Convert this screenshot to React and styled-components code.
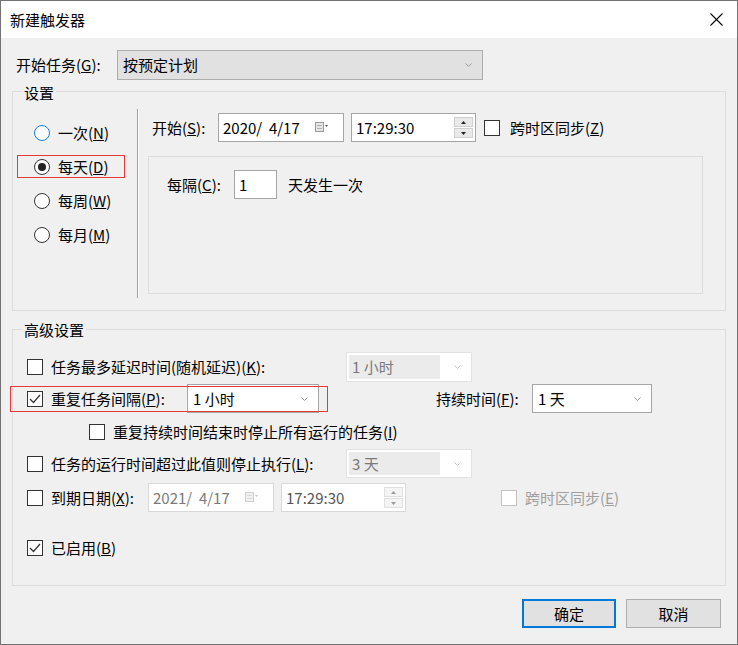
import React from "react";
import styled, { createGlobalStyle } from "styled-components";

const GlobalStyle = createGlobalStyle`
  html, body {
    margin: 0;
    padding: 0;
    background: #fff;
  }
  body {
    font-family: "Noto Sans CJK SC", "Noto Sans", sans-serif;
    font-size: 15px;
    line-height: 20px;
    color: #000;
  }
  * { box-sizing: border-box; }
`;

const Window = styled.div`
  width: 738px;
  height: 645px;
  border: 1px solid #737373;
  background: #f0f0f0;
  display: flex;
  flex-direction: column;
`;

const TitleBar = styled.div`
  height: 37px;
  background: #fff;
  display: flex;
  align-items: center;
  justify-content: space-between;
  padding: 0 14px 0 9px;
  flex-shrink: 0;
`;

const Body = styled.div`
  flex: 1;
  padding: 12px 11px 0 11px;
  display: flex;
  flex-direction: column;
`;

const Row = styled.div`
  display: flex;
  align-items: center;
  height: ${(p) => p.h || 29}px;
  margin-top: ${(p) => p.mt || 0}px;
  padding-left: ${(p) => p.pl || 0}px;
`;

const Label = styled.span`
  display: inline-block;
  flex-shrink: 0;
  width: ${(p) => (p.w ? p.w + "px" : "auto")};
  margin-left: ${(p) => p.ml || 0}px;
  color: ${(p) => (p.disabled ? "#a0a0a0" : "#000")};
  white-space: nowrap;
`;

const Group = styled.div`
  border: 1px solid #dcdcdc;
  margin-top: ${(p) => p.mt || 0}px;
  padding-bottom: ${(p) => p.pb || 0}px;
`;

const Legend = styled.div`
  width: fit-content;
  margin: ${(p) => p.mt}px 0 0 9px;
  padding: 0 2px;
  background: #f0f0f0;
`;

const SettingsBody = styled.div`
  display: flex;
  margin-top: 6px;
  height: 189px;
`;

const RadioColumn = styled.div`
  width: 124px;
  padding: 12px 0 0 4px;
  display: flex;
  flex-direction: column;
  gap: 11px;
`;

const RadioRow = styled.div`
  display: flex;
  align-items: center;
  gap: 8px;
  width: 108px;
  height: 23px;
  padding-left: 17px;
  outline: ${(p) => (p.mark ? "1px solid #e5393b" : "none")};
  outline-offset: -1px;
`;

const RadioDot = styled.span`
  width: 16px;
  height: 16px;
  border-radius: 50%;
  border: 1px solid ${(p) => (p.focus ? "#1a7fd6" : "#333")};
  background: #fff;
  display: flex;
  align-items: center;
  justify-content: center;
  flex-shrink: 0;
  &::after {
    content: "";
    width: 8px;
    height: 8px;
    border-radius: 50%;
    background: ${(p) => (p.checked ? "#222" : "transparent")};
  }
`;

const Separator = styled.div`
  width: 2px;
  border-left: 1px solid #a0a0a0;
  border-right: 1px solid #fff;
`;

const RightPanel = styled.div`
  flex: 1;
  margin-left: 9px;
  padding: 4px 22px 0 0;
  display: flex;
  flex-direction: column;
`;

const InnerBox = styled.div`
  margin-top: 14px;
  height: 138px;
  border: 1px solid #dcdcdc;
  padding: 13px 0 0 18px;
`;

const Field = styled.div`
  width: ${(p) => p.w}px;
  height: ${(p) => p.h || 29}px;
  margin-left: ${(p) => p.ml || 0}px;
  flex-shrink: 0;
  display: flex;
  align-items: center;
  padding-left: 4px;
  background: #fff;
  border: 1px solid ${(p) => (p.disabled ? "#d9d9d9" : "#a5a5a5")};
  color: ${(p) => (p.disabled ? p.dim || "#7a7a7a" : "#000")};
  white-space: pre;
`;

const FieldText = styled.span`
  flex: 1;
`;

const Combo = styled.div`
  width: ${(p) => p.w}px;
  height: ${(p) => p.h || 29}px;
  margin-left: ${(p) => p.ml || 0}px;
  flex-shrink: 0;
  display: flex;
  align-items: center;
  justify-content: space-between;
  padding: 0 10px 0 ${(p) => (p.tone === "disabled" ? 2 : 5)}px;
  background: ${(p) => (p.tone === "list" ? "#e1e1e1" : "#fff")};
  border: 1px solid
    ${(p) =>
      p.tone === "list" ? "#adadad" : p.tone === "disabled" ? "#e2e2e2" : "#a6a6a6"};
`;

const ComboText = styled.span`
  flex: 1;
  align-self: stretch;
  display: flex;
  align-items: center;
  color: ${(p) => (p.disabled ? "#7a7a7a" : "#000")};
  background: ${(p) => (p.disabled ? "#ebebeb" : "transparent")};
  margin: ${(p) => (p.disabled ? "2px 14px 2px 0" : "0")};
  padding-left: ${(p) => (p.disabled ? 3 : 0)}px;
`;

const Spinner = styled.div`
  display: flex;
  flex-direction: column;
  gap: 1px;
  margin-right: 2px;
`;

const SpinButton = styled.span`
  width: 19px;
  height: 10px;
  background: ${(p) => (p.disabled ? "#f4f4f4" : "#e9e9e9")};
  border: 1px solid ${(p) => (p.disabled ? "#e0e0e0" : "#cfcfcf")};
  display: flex;
  align-items: center;
  justify-content: center;
`;

const Box = styled.span`
  width: 16px;
  height: 16px;
  flex-shrink: 0;
  margin-left: ${(p) => p.ml || 0}px;
  margin-right: 8px;
  background: #fff;
  border: 1px solid ${(p) => (p.disabled ? "#c4c4c4" : "#333")};
  display: flex;
  align-items: center;
  justify-content: center;
`;

const Mark = styled.div`
  width: fit-content;
  display: flex;
  align-items: center;
  height: 26px;
  margin-left: -3px;
  padding: 0 9px 0 17px;
  outline: 1px solid #e5393b;
  outline-offset: -1px;
`;

const Footer = styled.div`
  display: flex;
  justify-content: flex-end;
  gap: 10px;
  margin: 13px 5px 0 0;
`;

const Button = styled.button`
  width: ${(p) => p.w}px;
  height: 29px;
  font: inherit;
  color: #000;
  background: #e1e1e1;
  border: ${(p) => (p.primary ? "2px solid #0078d7" : "1px solid #adadad")};
  padding: 0;
`;

const Chevron = ({ color = "#9a9a9a" }) => (
  <svg width="7" height="4" viewBox="0 0 7 4">
    <polyline points="0.5,0.5 3.5,3.5 6.5,0.5" fill="none" stroke={color} strokeWidth="1" />
  </svg>
);

const CalendarIcon = ({ dim }) => (
  <svg width="14" height="11" viewBox="0 0 14 11" style={{ marginRight: 14 }}>
    <rect x="0.5" y="0.5" width="8" height="9" fill={dim ? "#f2f2f2" : "#e6e6e6"} stroke={dim ? "#cfcfcf" : "#9a9a9a"} />
    <line x1="2" y1="3.5" x2="7" y2="3.5" stroke={dim ? "#d6d6d6" : "#b0b0b0"} />
    <line x1="2" y1="6.5" x2="7" y2="6.5" stroke={dim ? "#d6d6d6" : "#b0b0b0"} />
    <polygon points="10,3 13,3 11.5,5" fill={dim ? "#c8c8c8" : "#555"} />
  </svg>
);

const Tri = ({ up, dim }) => (
  <svg width="5" height="3" viewBox="0 0 5 3">
    <polygon points={up ? "0,3 5,3 2.5,0" : "0,0 5,0 2.5,3"} fill={dim ? "#9a9a9a" : "#222"} />
  </svg>
);

const Check = ({ dim }) => (
  <svg width="12" height="10" viewBox="0 0 12 10">
    <polyline points="1,5 4.5,8.5 11,1" fill="none" stroke={dim ? "#999" : "#333"} strokeWidth="1.2" />
  </svg>
);

const CheckBox = ({ checked, disabled, ml }) => (
  <Box disabled={disabled} ml={ml}>
    {checked && <Check />}
  </Box>
);

const TimeField = ({ ml, disabled, value }) => (
  <Field w={125} ml={ml} disabled={disabled} dim="#555">
    <FieldText>{value}</FieldText>
    <Spinner>
      <SpinButton disabled={disabled}><Tri up dim={disabled} /></SpinButton>
      <SpinButton disabled={disabled}><Tri dim={disabled} /></SpinButton>
    </Spinner>
  </Field>
);

const DateField = ({ ml, disabled, value }) => (
  <Field w={126} ml={ml} disabled={disabled}>
    <FieldText>{value}</FieldText>
    <CalendarIcon dim={disabled} />
  </Field>
);

const ComboBox = ({ w, h, ml, tone, value }) => (
  <Combo w={w} h={h} ml={ml} tone={tone}>
    <ComboText disabled={tone === "disabled"}>{value}</ComboText>
    <Chevron color={tone === "disabled" ? "#c8c8c8" : "#9a9a9a"} />
  </Combo>
);

const radios = [
  { text: "一次", key: "N", focus: true },
  { text: "每天", key: "D", checked: true, mark: true },
  { text: "每周", key: "W" },
  { text: "每月", key: "M" },
];

const Key = ({ k }) => (
  <>
    (<u>{k}</u>)
  </>
);

export default function App() {
  return (
    <>
      <GlobalStyle />
      <Window>
        <TitleBar>
          <span>新建触发器</span>
          <svg width="13" height="13" viewBox="0 0 13 13">
            <line x1="0.5" y1="0.5" x2="12.5" y2="12.5" stroke="#000" strokeWidth="1.1" />
            <line x1="12.5" y1="0.5" x2="0.5" y2="12.5" stroke="#000" strokeWidth="1.1" />
          </svg>
        </TitleBar>

        <Body>
          <Row h={30} pl={4}>
            <Label w={101}>
              开始任务<Key k="G" />:
            </Label>
            <ComboBox w={366} h={30} tone="list" value="按预定计划" />
          </Row>

          <Group mt={11} pb={12}>
            <Legend mt={-9}>设置</Legend>
            <SettingsBody>
              <RadioColumn>
                {radios.map((r) => (
                  <RadioRow key={r.key} mark={r.mark}>
                    <RadioDot checked={r.checked} focus={r.focus} />
                    <Label>
                      {r.text}
                      <Key k={r.key} />
                    </Label>
                  </RadioRow>
                ))}
              </RadioColumn>
              <Separator />
              <RightPanel>
                <Row pl={4}>
                  <Label w={66}>
                    开始<Key k="S" />:
                  </Label>
                  <DateField value="2020/  4/17" />
                  <TimeField ml={7} value="17:29:30" />
                  <CheckBox ml={8} />
                  <Label ml={2}>
                    跨时区同步<Key k="Z" />
                  </Label>
                </Row>
                <InnerBox>
                  <Row>
                    <Label w={67}>
                      每隔<Key k="C" />:
                    </Label>
                    <Field w={43}>1</Field>
                    <Label ml={11}>天发生一次</Label>
                  </Row>
                </InnerBox>
              </RightPanel>
            </SettingsBody>
          </Group>

          <Group mt={18} pb={26}>
            <Legend mt={-10}>高级设置</Legend>

            <Row h={30} mt={12} pl={14}>
              <CheckBox />
              <Label w={295}>
                任务最多延迟时间(随机延迟)<Key k="K" />:
              </Label>
              <ComboBox w={126} h={30} tone="disabled" value="1 小时" />
            </Row>

            <Row mt={2}>
              <Mark>
                <CheckBox checked />
                <Label w={136}>
                  重复任务间隔<Key k="P" />:
                </Label>
                <ComboBox w={132} h={29} value="1 小时" />
              </Mark>
              <Label w={96} ml={108}>
                持续时间<Key k="F" />:
              </Label>
              <ComboBox w={120} h={29} value="1 天" />
            </Row>

            <Row h={22} mt={8} pl={76}>
              <CheckBox />
              <Label>
                重复持续时间结束时停止所有运行的任务<Key k="I" />
              </Label>
            </Row>

            <Row mt={6} pl={14}>
              <CheckBox />
              <Label w={295}>
                任务的运行时间超过此值则停止执行<Key k="L" />:
              </Label>
              <ComboBox w={126} h={29} tone="disabled" value="3 天" />
            </Row>

            <Row mt={5} pl={14}>
              <CheckBox />
              <Label w={97}>
                到期日期<Key k="X" />:
              </Label>
              <DateField disabled value="2021/  4/17" />
              <TimeField disabled ml={7} value="17:29:30" />
              <CheckBox disabled ml={95} />
              <Label disabled>
                跨时区同步<Key k="E" />
              </Label>
            </Row>

            <Row h={22} mt={25} pl={14}>
              <CheckBox checked />
              <Label>
                已启用<Key k="B" />
              </Label>
            </Row>
          </Group>

          <Footer>
            <Button w={94} primary>确定</Button>
            <Button w={95}>取消</Button>
          </Footer>
        </Body>
      </Window>
    </>
  );
}
